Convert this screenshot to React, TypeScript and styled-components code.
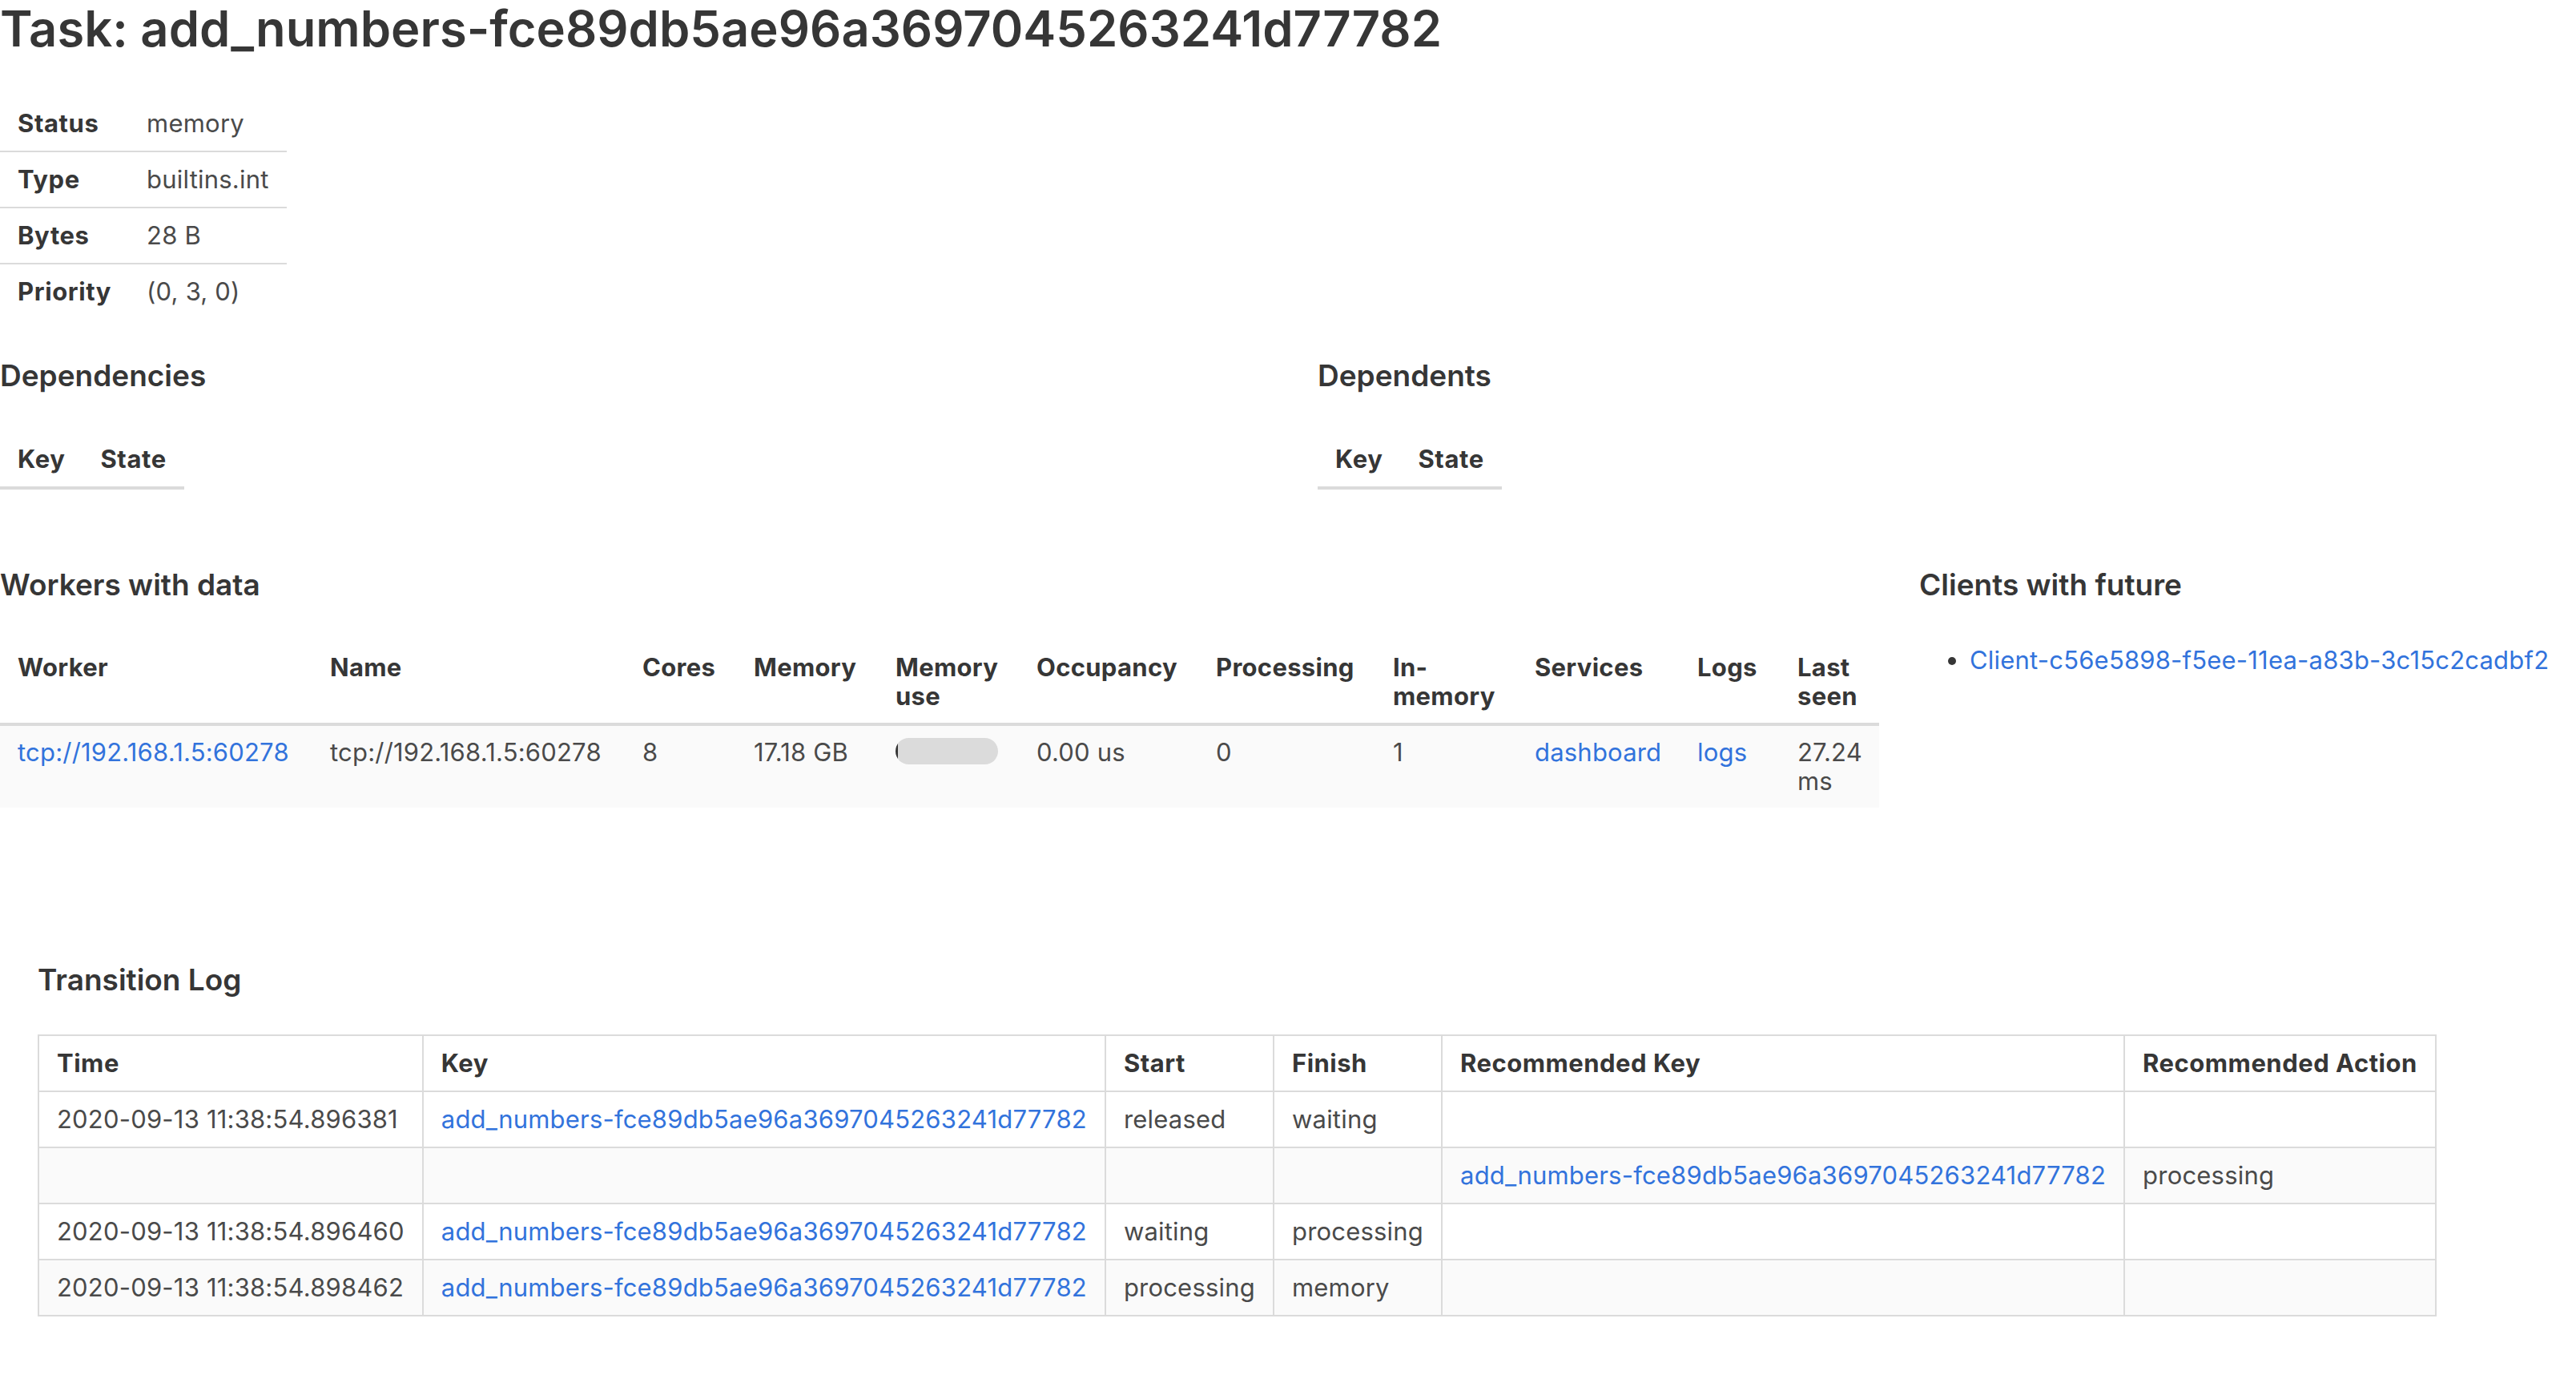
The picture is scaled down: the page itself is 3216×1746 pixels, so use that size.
import React from "react";
import styled, { createGlobalStyle } from "styled-components";

const GlobalStyle = createGlobalStyle`
  html, body { margin: 0; padding: 0; background: #ffffff; }
  body {
    font-family: Inter, "Noto Sans", "Liberation Sans", sans-serif;
    font-size: 31px;
    line-height: 36px;
    letter-spacing: 0.2px;
    color: #4a4a4a;
  }
  * { box-sizing: border-box; }
`;

const Page = styled.div`
  display: flex;
  flex-direction: column;
  align-items: stretch;
`;

const Title = styled.h1`
  margin: 0 0 48px;
  font-size: 61.5px;
  line-height: 72px;
  font-weight: 600;
  letter-spacing: 0;
  color: #363636;
`;

const SectionTitle = styled.h3<{ $gap?: number }>`
  margin: 0 0 ${(p) => p.$gap ?? 48}px;
  font-size: 37px;
  line-height: 45px;
  font-weight: 600;
  letter-spacing: 0;
  color: #363636;
`;

const Link = styled.a`
  color: #3273dc;
  text-decoration: none;
`;

/* ---------- info table ---------- */
const InfoTable = styled.table`
  border-collapse: collapse;
  margin-bottom: 48px;
  align-self: flex-start;
  tr:last-child > * { border-bottom: 0; }
`;

const InfoLabel = styled.th`
  text-align: left;
  vertical-align: top;
  padding: 16px 22px;
  font-weight: 700;
  letter-spacing: 0.6px;
  color: #363636;
  border-bottom: 2px solid #dbdbdb;
`;

const InfoValue = styled.td`
  vertical-align: top;
  padding: 16px 22px;
  border-bottom: 2px solid #dbdbdb;
`;

/* ---------- dependencies ---------- */
const TwoColumns = styled.div`
  display: grid;
  grid-template-columns: 1645px 1fr;
  margin-bottom: 96px;
`;

const Section = styled.section`
  display: flex;
  flex-direction: column;
  align-items: flex-start;
`;

const KeyTable = styled.table`
  border-collapse: collapse;
`;

const HeadCell = styled.th`
  text-align: left;
  vertical-align: top;
  padding: 16px 22px;
  font-weight: 700;
  letter-spacing: 0.6px;
  color: #363636;
  border-bottom: 4px solid #dbdbdb;
  background: #ffffff;
`;

/* ---------- workers ---------- */
const WorkersRow = styled.div`
  display: grid;
  grid-template-columns: 2346px 1fr;
  column-gap: 50px;
  margin-bottom: 192px;
`;

const WorkerTable = styled.table`
  width: 100%;
  table-layout: fixed;
  border-collapse: collapse;
`;

const WorkerCol = styled.col<{ $w: number }>`
  width: ${(p) => p.$w}px;
`;

const WorkerHead = styled.th`
  text-align: left;
  vertical-align: top;
  padding: 15px 22px;
  font-weight: 700;
  letter-spacing: 0.3px;
  color: #363636;
  border-bottom: 4px solid #dbdbdb;
`;

const WorkerBodyRow = styled.tr`
  background: #fafafa;
`;

const WorkerCell = styled.td`
  vertical-align: top;
  padding: 15px 22px;
`;

const NoWrap = styled.span`
  white-space: nowrap;
`;

const MemBar = styled.div`
  width: 128px;
  height: 33px;
  border-radius: 17px;
  background: #dbdbdb;
  overflow: hidden;
  display: flex;
`;

const MemFill = styled.div`
  height: 100%;
  min-width: 3px;
  background: #363636;
`;

const ClientList = styled.ul`
  margin: 6px 0 0;
  padding-left: 63px;
  color: #363636;
`;

const ClientItem = styled.li`
  line-height: 36px;
`;

/* ---------- transition log ---------- */
const LogSection = styled.section`
  padding-left: 47px;
  display: flex;
  flex-direction: column;
  align-items: flex-start;
`;

const LogTable = styled.table`
  border-collapse: collapse;
  border: 2px solid #dbdbdb;
  tbody tr:nth-child(even) { background: #fafafa; }
`;

const LogHead = styled.th`
  text-align: left;
  vertical-align: top;
  padding: 16px 22px;
  font-weight: 700;
  letter-spacing: 0.5px;
  color: #363636;
  border: 2px solid #dbdbdb;
  white-space: nowrap;
`;

const LogCell = styled.td`
  vertical-align: top;
  padding: 16px 22px;
  border: 2px solid #dbdbdb;
  white-space: nowrap;
  height: 70px;
`;

const KEY = "add_numbers-fce89db5ae96a3697045263241d77782";

const info: [string, string][] = [
  ["Status", "memory"],
  ["Type", "builtins.int"],
  ["Bytes", "28 B"],
  ["Priority", "(0, 3, 0)"],
];

const workerCols = [390, 390, 139, 177, 176, 224, 221, 177, 203, 125, 124];
const workerHeads = [
  "Worker",
  "Name",
  "Cores",
  "Memory",
  "Memory use",
  "Occupancy",
  "Processing",
  "In-memory",
  "Services",
  "Logs",
  "Last seen",
];

type LogRow = {
  time: string;
  key: string;
  start: string;
  finish: string;
  recKey: string;
  recAction: string;
};

const logRows: LogRow[] = [
  { time: "2020-09-13 11:38:54.896381", key: KEY, start: "released", finish: "waiting", recKey: "", recAction: "" },
  { time: "", key: "", start: "", finish: "", recKey: KEY, recAction: "processing" },
  { time: "2020-09-13 11:38:54.896460", key: KEY, start: "waiting", finish: "processing", recKey: "", recAction: "" },
  { time: "2020-09-13 11:38:54.898462", key: KEY, start: "processing", finish: "memory", recKey: "", recAction: "" },
];

function DepTable() {
  return (
    <KeyTable>
      <thead>
        <tr>
          <HeadCell>Key</HeadCell>
          <HeadCell>State</HeadCell>
        </tr>
      </thead>
      <tbody />
    </KeyTable>
  );
}

export default function App() {
  return (
    <>
      <GlobalStyle />
      <Page>
        <Title>Task: {KEY}</Title>

        <InfoTable>
          <tbody>
            {info.map(([k, v]) => (
              <tr key={k}>
                <InfoLabel>{k}</InfoLabel>
                <InfoValue>{v}</InfoValue>
              </tr>
            ))}
          </tbody>
        </InfoTable>

        <TwoColumns>
          <Section>
            <SectionTitle>Dependencies</SectionTitle>
            <DepTable />
          </Section>
          <Section>
            <SectionTitle>Dependents</SectionTitle>
            <DepTable />
          </Section>
        </TwoColumns>

        <WorkersRow>
          <Section>
            <SectionTitle>Workers with data</SectionTitle>
            <WorkerTable>
              <colgroup>
                {workerCols.map((w, i) => (
                  <WorkerCol key={i} $w={w} />
                ))}
              </colgroup>
              <thead>
                <tr>
                  {workerHeads.map((h) => (
                    <WorkerHead key={h}>{h}</WorkerHead>
                  ))}
                </tr>
              </thead>
              <tbody>
                <WorkerBodyRow>
                  <WorkerCell>
                    <NoWrap>
                      <Link href="#">tcp://192.168.1.5:60278</Link>
                    </NoWrap>
                  </WorkerCell>
                  <WorkerCell>
                    <NoWrap>tcp://192.168.1.5:60278</NoWrap>
                  </WorkerCell>
                  <WorkerCell>8</WorkerCell>
                  <WorkerCell>
                    <NoWrap>17.18 GB</NoWrap>
                  </WorkerCell>
                  <WorkerCell>
                    <MemBar>
                      <MemFill style={{ width: "0.5%" }} />
                    </MemBar>
                  </WorkerCell>
                  <WorkerCell>0.00 us</WorkerCell>
                  <WorkerCell>0</WorkerCell>
                  <WorkerCell>1</WorkerCell>
                  <WorkerCell>
                    <Link href="#">dashboard</Link>
                  </WorkerCell>
                  <WorkerCell>
                    <Link href="#">logs</Link>
                  </WorkerCell>
                  <WorkerCell>27.24 ms</WorkerCell>
                </WorkerBodyRow>
              </tbody>
            </WorkerTable>
          </Section>
          <Section>
            <SectionTitle>Clients with future</SectionTitle>
            <ClientList>
              <ClientItem>
                <Link href="#">Client-c56e5898-f5ee-11ea-a83b-3c15c2cadbf2</Link>
              </ClientItem>
            </ClientList>
          </Section>
        </WorkersRow>

        <LogSection>
          <SectionTitle $gap={46}>Transition Log</SectionTitle>
          <LogTable>
            <thead>
              <tr>
                <LogHead>Time</LogHead>
                <LogHead>Key</LogHead>
                <LogHead>Start</LogHead>
                <LogHead>Finish</LogHead>
                <LogHead>Recommended Key</LogHead>
                <LogHead>Recommended Action</LogHead>
              </tr>
            </thead>
            <tbody>
              {logRows.map((r, i) => (
                <tr key={i}>
                  <LogCell>{r.time}</LogCell>
                  <LogCell>{r.key && <Link href="#">{r.key}</Link>}</LogCell>
                  <LogCell>{r.start}</LogCell>
                  <LogCell>{r.finish}</LogCell>
                  <LogCell>{r.recKey && <Link href="#">{r.recKey}</Link>}</LogCell>
                  <LogCell>{r.recAction}</LogCell>
                </tr>
              ))}
            </tbody>
          </LogTable>
        </LogSection>
      </Page>
    </>
  );
}
